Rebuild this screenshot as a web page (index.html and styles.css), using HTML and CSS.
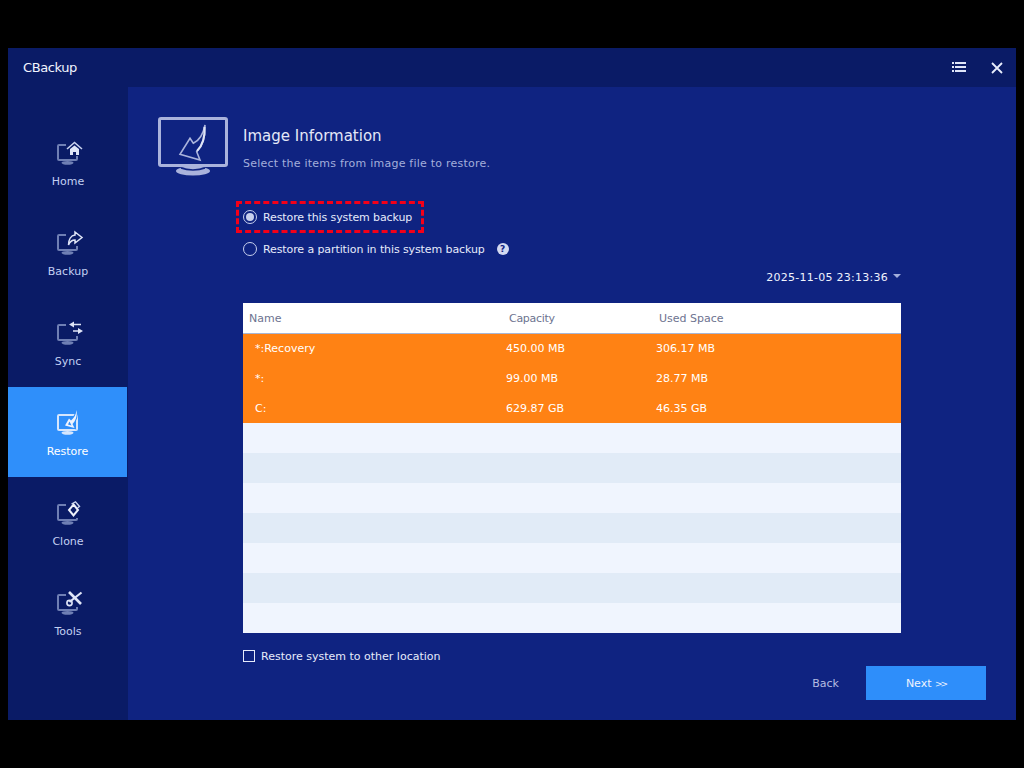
FILE: index.html
```html
<!DOCTYPE html>
<html lang="en">

<head>
    <meta charset="UTF-8">
    <title>CBackup</title>
    <link rel="stylesheet" href="styles.css">
</head>

<body>
    <svg class="defs" width="0" height="0">
        <symbol id="monitor" viewBox="0 0 27 25">
            <rect x="2" y="4" width="19" height="15" rx="1" fill="none" stroke="currentColor" stroke-width="2" />
            <ellipse cx="11.5" cy="21.8" rx="6" ry="1.9" fill="currentColor" />
        </symbol>
    </svg>
    <div class="window">
        <div class="titlebar">
            <span class="app-name">CBackup</span>
            <div class="title-buttons">
                <svg width="14" height="11" viewBox="0 0 14 11" fill="#dfe6fa">
                    <rect x="0" y="0" width="2" height="2" />
                    <rect x="3" y="0" width="11" height="2" />
                    <rect x="0" y="4" width="2" height="2" />
                    <rect x="3" y="4" width="11" height="2" />
                    <rect x="0" y="8" width="2" height="2" />
                    <rect x="3" y="8" width="11" height="2" />
                </svg>
                <svg width="12" height="12" viewBox="0 0 12 12" stroke="#e8edfc" stroke-width="1.8">
                    <path d="M1 1 L11 11 M11 1 L1 11" />
                </svg>
            </div>
        </div>
        <div class="body-row">
            <!-- menu de gauche -->
            <div class="sidebar">
                <div class="nav-item">
                    <svg class="nav-icon" viewBox="0 0 27 25">
                        <use href="#monitor" />
                        <rect x="10" y="0" width="17" height="15" fill="#0a1b66" />
                        <path d="M11 8 L18.5 1.5 L26 8" fill="none" stroke="#c9d2ee" stroke-width="1.6" />
                        <path d="M14 8 L18.5 4.5 L23 8 V14 H20 V11 H17 V14 H14 Z" fill="#dfe5f7" />
                    </svg>
                    <span>Home</span>
                </div>
                <div class="nav-item">
                    <svg class="nav-icon" viewBox="0 0 27 25">
                        <use href="#monitor" />
                        <rect x="10" y="0" width="17" height="15" fill="#0a1b66" />
                        <path d="M19 1 L26 6.5 L19 12 V9 C16 9 14 10.5 12.5 14 C12.5 8.5 15 4.5 19 4 Z" fill="none" stroke="#dfe5f7" stroke-width="1.5" />
                    </svg>
                    <span>Backup</span>
                </div>
                <div class="nav-item">
                    <svg class="nav-icon" viewBox="0 0 27 25">
                        <use href="#monitor" />
                        <rect x="10" y="0" width="17" height="15" fill="#0a1b66" />
                        <path d="M17 3.5 H25 M17 10 H23" stroke="#dfe5f7" stroke-width="1.6" />
                        <path d="M18 0.5 L13 3.5 L18 6.5 Z M22 7 L27 10 L22 13 Z" fill="#dfe5f7" />
                    </svg>
                    <span>Sync</span>
                </div>
                <div class="nav-item active">
                    <svg class="nav-icon" viewBox="0 0 27 25">
                        <use href="#monitor" />
                        <path d="M20.5 -1 C21.5 5 19.5 10 16.5 13 L18.5 17 L9 14.5 L13 7.5 L15 9.5 C18 7 20 4 20.5 -1 Z" fill="#eef3fe" stroke="#2f8ffa" stroke-width="2" paint-order="stroke" />
                        <path d="M13.5 10.5 L12 13.5 L15.5 14.5 Z" fill="#2f8ffa" />
                    </svg>
                    <span>Restore</span>
                </div>
                <div class="nav-item">
                    <svg class="nav-icon" viewBox="0 0 27 25">
                        <use href="#monitor" />
                        <rect x="10" y="0" width="17" height="17" fill="#0a1b66" />
                        <path d="M15.5 3 L19.5 0.8 L23.5 5.5 L21.5 7" fill="none" stroke="#c9d2ee" stroke-width="1.4" />
                        <path d="M17.5 3.5 L22 9 L17.5 14.5 L13 9 Z" fill="none" stroke="#eef1fb" stroke-width="2" />
                    </svg>
                    <span>Clone</span>
                </div>
                <div class="nav-item">
                    <svg class="nav-icon" viewBox="0 0 27 25">
                        <use href="#monitor" />
                        <rect x="10" y="0" width="17" height="16" fill="#0a1b66" />
                        <path d="M13 1 L25 13" stroke="#dfe5f7" stroke-width="2.6" />
                        <path d="M25.5 1.5 L13.5 11" stroke="#dfe5f7" stroke-width="2.2" />
                        <circle cx="13.5" cy="12" r="2.6" fill="none" stroke="#dfe5f7" stroke-width="1.6" />
                    </svg>
                    <span>Tools</span>
                </div>
            </div>

            <div class="main">
                <div class="page-head">
                    <svg class="head-icon" width="70" height="60" viewBox="0 0 70 60">
                        <rect x="1.5" y="1.5" width="67" height="47" rx="1.5" fill="none" stroke="#aab3dc" stroke-width="3" />
                        <path d="M47 8 C47.5 21 45 29 38.7 34.7 L42 43 L22 37.3 L32 21.3 L35.3 26.3 C42 23 45.5 16 47 8 Z" fill="none" stroke="#aab3dc" stroke-width="1.6" />
                        <path d="M46.5 10 C47 20 45 28 39 34" fill="none" stroke="#dfe4f5" stroke-width="2" />
                        <ellipse cx="35" cy="54" rx="17" ry="4.5" fill="#aab3dc" />
                        <path d="M23 51 C30 53.5 40 53.5 47 51" fill="none" stroke="#0f2381" stroke-width="1.5" />
                    </svg>
                    <div class="head-text">
                        <h2>Image Information</h2>
                        <p>Select the items from image file to restore.</p>
                    </div>
                </div>

                <div class="content">
                    <div class="options">
                        <label class="option highlighted"><span class="radio checked"></span>Restore this system backup</label>
                        <label class="option"><span class="radio"></span>Restore a partition in this system backup<span class="help">?</span></label>
                    </div>
                    <div class="date-row">2025-11-05 23:13:36<span class="caret"></span></div>

                    <table class="parts">
                        <thead>
                            <tr><th class="col-name">Name</th><th class="col-cap">Capacity</th><th>Used Space</th></tr>
                        </thead>
                        <tbody>
                            <tr class="sel"><td>*:Recovery</td><td>450.00 MB</td><td>306.17 MB</td></tr>
                            <tr class="sel"><td>*:</td><td>99.00 MB</td><td>28.77 MB</td></tr>
                            <tr class="sel"><td>C:</td><td>629.87 GB</td><td>46.35 GB</td></tr>
                            <tr><td></td><td></td><td></td></tr>
                            <tr><td></td><td></td><td></td></tr>
                            <tr><td></td><td></td><td></td></tr>
                            <tr><td></td><td></td><td></td></tr>
                            <tr><td></td><td></td><td></td></tr>
                            <tr><td></td><td></td><td></td></tr>
                            <tr><td></td><td></td><td></td></tr>
                        </tbody>
                    </table>

                    <label class="check-row"><span class="checkbox"></span>Restore system to other location</label>
                </div>

                <div class="footer">
                    <button class="btn-back" type="button">Back</button>
                    <button class="btn-next" type="button">Next <span class="arrows">&gt;&gt;</span></button>
                </div>
            </div>
        </div>
    </div>
</body>

</html>
```

FILE: styles.css
```css
body {
    font-family: "DejaVu Sans", Arial, sans-serif;
    font-size: 11px;
    margin: 0;
    padding: 48px 8px;
    background-color: black;
    color: #e6ebfb;
    overflow: hidden;
}

.defs {
    position: absolute;
}

.window {
    height: 672px;
    display: flex;
    flex-direction: column;
    background-color: #0a1b66;
}

.titlebar {
    height: 39px;
    flex-shrink: 0;
    display: flex;
    justify-content: space-between;
    align-items: center;
    padding: 0 13px 0 15px;
}

.app-name {
    font-size: 13px;
    letter-spacing: -0.4px;
    color: #f2f5fe;
}

.title-buttons {
    display: flex;
    align-items: center;
    gap: 25px;
}

.body-row {
    flex: 1;
    display: flex;
}

.sidebar {
    width: 120px;
    flex-shrink: 0;
    padding-top: 30px;
}

.nav-item {
    height: 90px;
    box-sizing: border-box;
    padding-top: 24px;
    display: flex;
    flex-direction: column;
    align-items: center;
    color: #c3d0f2;
}

.nav-icon {
    width: 27px;
    height: 25px;
    margin-left: 3px;
    overflow: visible;
    color: #6f7fb4;
}

.nav-item span {
    margin-top: 7px;
    line-height: 18px;
}

.nav-item.active {
    width: 119px;
    background-color: #2f8ffa;
    color: white;
}

.nav-item.active .nav-icon {
    color: #d5e6fd;
}

.main {
    flex: 1;
    position: relative;
    background-color: #0f2381;
}

.page-head {
    display: flex;
    padding: 30px 0 0 30px;
}

.head-icon {
    flex-shrink: 0;
}

.head-text {
    margin-left: 15px;
}

.head-text h2 {
    font-size: 15px;
    font-weight: normal;
    line-height: 22px;
    margin: 8px 0 0;
    color: #e4e8f8;
}

.head-text p {
    margin: 9px 0 0;
    line-height: 16px;
    letter-spacing: 0.23px;
    color: #a3aedb;
}

.content {
    width: 658px;
    margin: 24px 0 0 115px;
}

.options {
    display: flex;
    flex-direction: column;
    align-items: flex-start;
}

.option {
    display: flex;
    align-items: center;
    height: 32px;
    letter-spacing: -0.1px;
}

.option.highlighted {
    box-sizing: border-box;
    width: 188px;
    margin-left: -7px;
    padding-left: 4px;
    border: 3px dashed #f50018;
}

.radio {
    width: 12px;
    height: 12px;
    margin-right: 6px;
    border: 1px solid #c8d0ee;
    border-radius: 50%;
    position: relative;
}

.radio.checked::after {
    content: "";
    position: absolute;
    left: 2px;
    top: 2px;
    width: 8px;
    height: 8px;
    border-radius: 50%;
    background-color: #c8d0ee;
}

.help {
    width: 12px;
    height: 12px;
    margin-left: 12px;
    border-radius: 50%;
    background-color: #d3d9f0;
    color: #0f2381;
    font-size: 9px;
    font-weight: bold;
    line-height: 12px;
    text-align: center;
}

.date-row {
    display: flex;
    justify-content: flex-end;
    align-items: center;
    height: 24px;
    letter-spacing: 0.26px;
    color: #f0f3fd;
}

.caret {
    margin: 0 0 3px 5px;
    border-left: 4px solid transparent;
    border-right: 4px solid transparent;
    border-top: 4px solid #a3aedb;
}

.parts {
    width: 658px;
    margin-top: 14px;
    border-collapse: collapse;
    table-layout: fixed;
}

.parts th {
    height: 30px;
    padding: 2px 0 0;
    box-sizing: border-box;
    background-color: white;
    border-bottom: 1px solid #a6b6d6;
    color: #6d7390;
    font-weight: normal;
    text-align: left;
}

.parts th.col-name {
    width: 263px;
    padding-left: 6px;
}

.parts th.col-cap {
    width: 150px;
    padding-left: 3px;
    letter-spacing: -0.3px;
}

.parts th:last-child {
    padding-left: 3px;
}

.parts td {
    height: 30px;
    padding: 1px 0 0;
    box-sizing: border-box;
}

.parts td:first-child {
    padding-left: 12px;
}

.parts tbody tr {
    background-color: #f0f5fe;
}

.parts tbody tr:nth-child(odd) {
    background-color: #e1ebf7;
}

.parts tbody tr.sel {
    background-color: #ff8214;
    color: white;
}

.check-row {
    display: flex;
    align-items: center;
    height: 18px;
    margin-top: 14px;
}

.checkbox {
    width: 10px;
    height: 10px;
    margin-right: 6px;
    border: 1px solid #e6ebfb;
}

.footer {
    position: absolute;
    right: 30px;
    bottom: 20px;
    display: flex;
    align-items: center;
}

.footer button {
    height: 34px;
    border: none;
    font-family: inherit;
    font-size: 11px;
}

.btn-back {
    background: none;
    color: #b4bde2;
    padding: 0;
    margin-right: 27px;
}

.btn-next {
    width: 120px;
    background-color: #2e8efa;
    color: #eef3fe;
}

.arrows {
    font-size: 9px;
    letter-spacing: -2px;
}
```
